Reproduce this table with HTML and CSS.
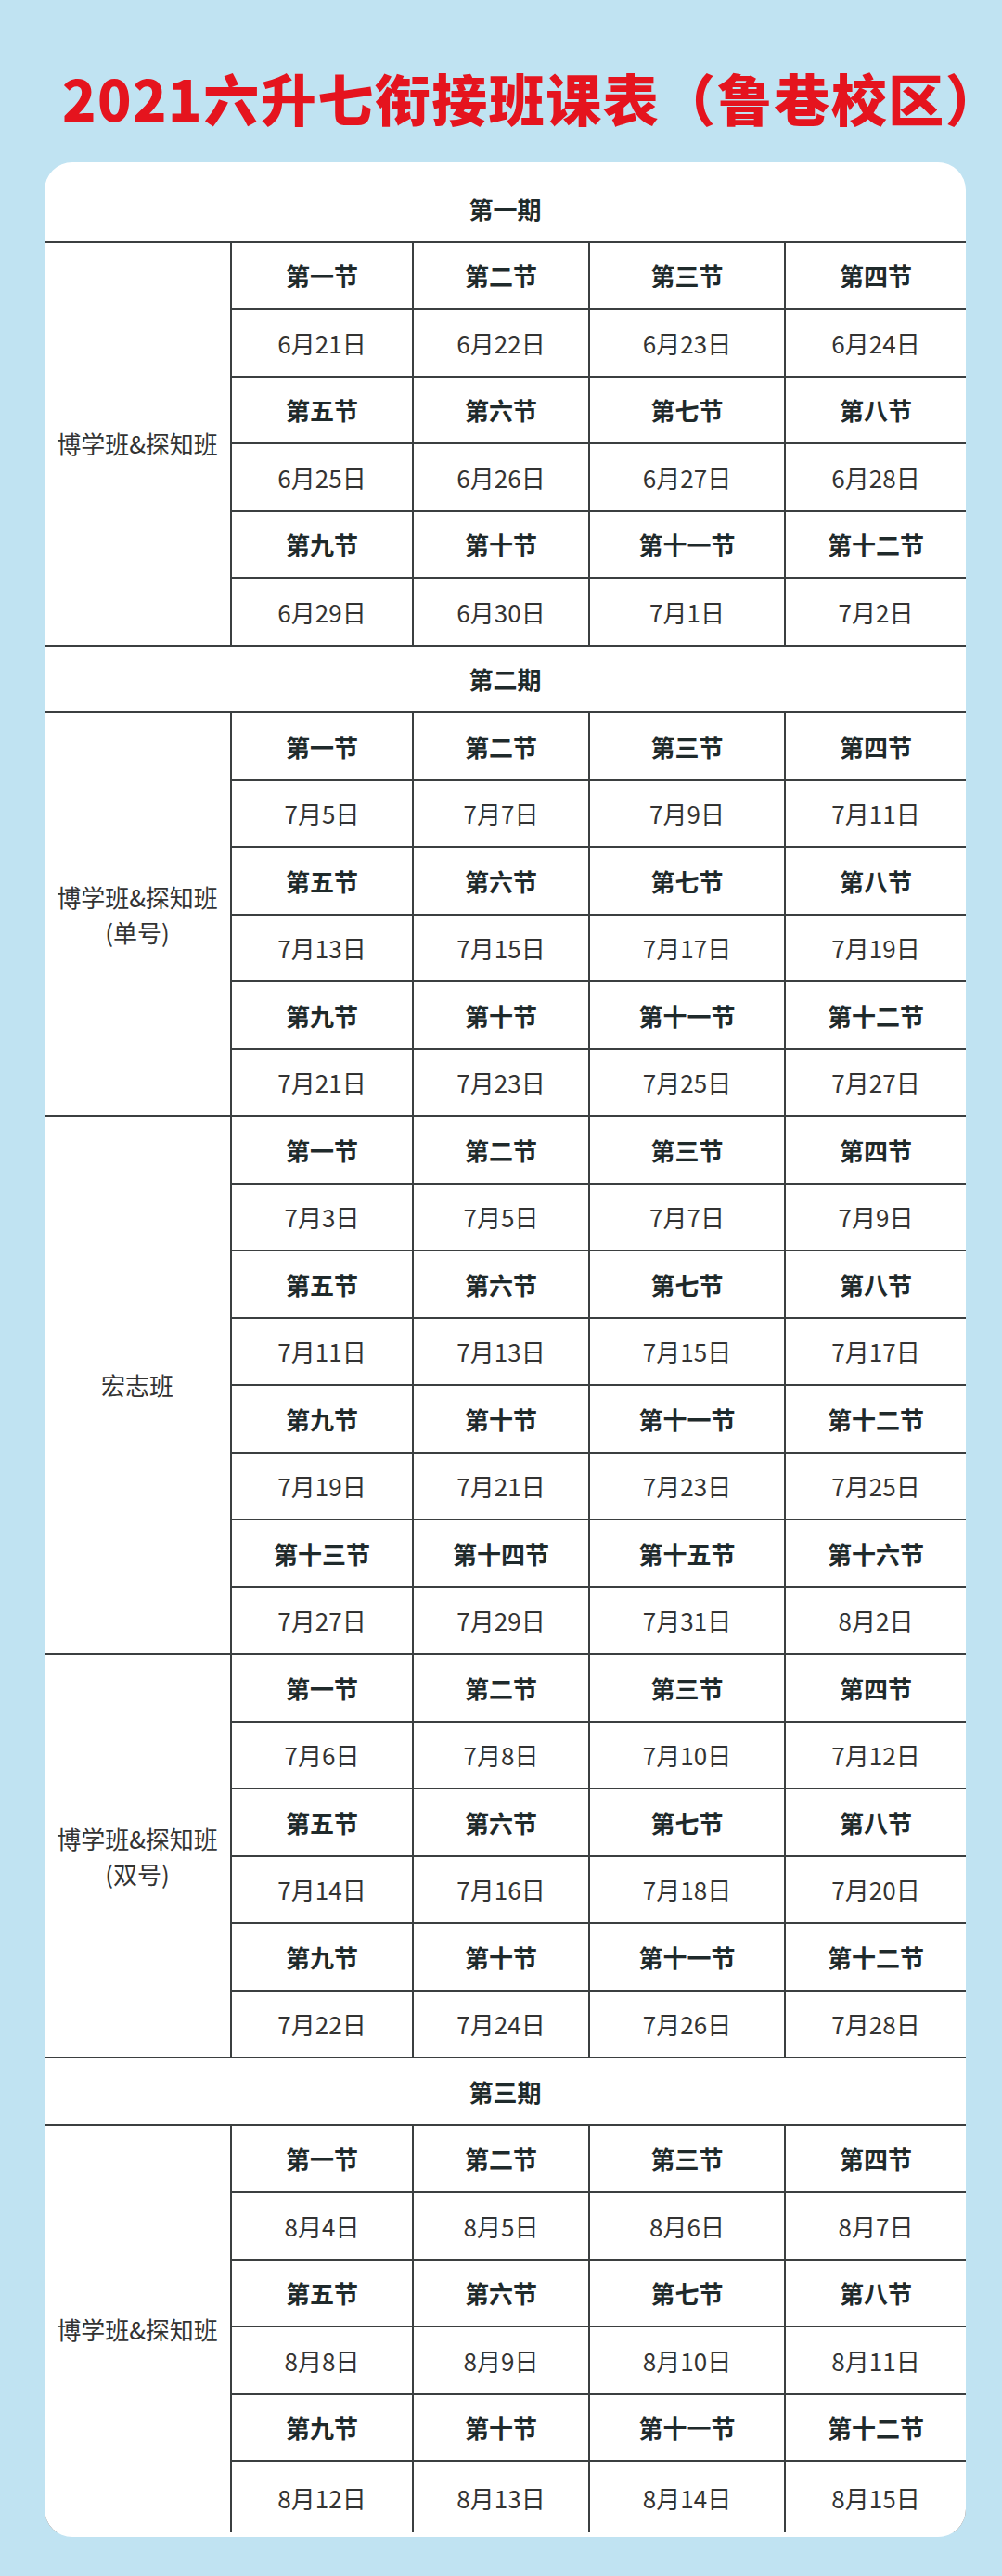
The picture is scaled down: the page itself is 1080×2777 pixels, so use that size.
FILE: index.html
```html
<!DOCTYPE html>
<html lang="zh-CN">
<head>
<meta charset="utf-8">
<title>2021六升七衔接班课表（鲁巷校区）</title>
<link rel="stylesheet" href="styles.css">
</head>
<body>
<div class="page">
  <h1 class="title">2021六升七衔接班课表（鲁巷校区）</h1>
  <div class="card">
    <div class="period first">第一期</div>
    <div class="block r6">
      <div class="label">博学班&amp;探知班</div>
      <div class="h">第一节</div><div class="h">第二节</div><div class="h">第三节</div><div class="h">第四节</div>
      <div class="d">6月21日</div><div class="d">6月22日</div><div class="d">6月23日</div><div class="d">6月24日</div>
      <div class="h">第五节</div><div class="h">第六节</div><div class="h">第七节</div><div class="h">第八节</div>
      <div class="d">6月25日</div><div class="d">6月26日</div><div class="d">6月27日</div><div class="d">6月28日</div>
      <div class="h">第九节</div><div class="h">第十节</div><div class="h">第十一节</div><div class="h">第十二节</div>
      <div class="d">6月29日</div><div class="d">6月30日</div><div class="d">7月1日</div><div class="d">7月2日</div>
    </div>
    <div class="period">第二期</div>
    <div class="block r6">
      <div class="label">博学班&amp;探知班<br>(单号)</div>
      <div class="h">第一节</div><div class="h">第二节</div><div class="h">第三节</div><div class="h">第四节</div>
      <div class="d">7月5日</div><div class="d">7月7日</div><div class="d">7月9日</div><div class="d">7月11日</div>
      <div class="h">第五节</div><div class="h">第六节</div><div class="h">第七节</div><div class="h">第八节</div>
      <div class="d">7月13日</div><div class="d">7月15日</div><div class="d">7月17日</div><div class="d">7月19日</div>
      <div class="h">第九节</div><div class="h">第十节</div><div class="h">第十一节</div><div class="h">第十二节</div>
      <div class="d">7月21日</div><div class="d">7月23日</div><div class="d">7月25日</div><div class="d">7月27日</div>
    </div>
    <div class="block r8">
      <div class="label">宏志班</div>
      <div class="h">第一节</div><div class="h">第二节</div><div class="h">第三节</div><div class="h">第四节</div>
      <div class="d">7月3日</div><div class="d">7月5日</div><div class="d">7月7日</div><div class="d">7月9日</div>
      <div class="h">第五节</div><div class="h">第六节</div><div class="h">第七节</div><div class="h">第八节</div>
      <div class="d">7月11日</div><div class="d">7月13日</div><div class="d">7月15日</div><div class="d">7月17日</div>
      <div class="h">第九节</div><div class="h">第十节</div><div class="h">第十一节</div><div class="h">第十二节</div>
      <div class="d">7月19日</div><div class="d">7月21日</div><div class="d">7月23日</div><div class="d">7月25日</div>
      <div class="h">第十三节</div><div class="h">第十四节</div><div class="h">第十五节</div><div class="h">第十六节</div>
      <div class="d">7月27日</div><div class="d">7月29日</div><div class="d">7月31日</div><div class="d">8月2日</div>
    </div>
    <div class="block r6">
      <div class="label">博学班&amp;探知班<br>(双号)</div>
      <div class="h">第一节</div><div class="h">第二节</div><div class="h">第三节</div><div class="h">第四节</div>
      <div class="d">7月6日</div><div class="d">7月8日</div><div class="d">7月10日</div><div class="d">7月12日</div>
      <div class="h">第五节</div><div class="h">第六节</div><div class="h">第七节</div><div class="h">第八节</div>
      <div class="d">7月14日</div><div class="d">7月16日</div><div class="d">7月18日</div><div class="d">7月20日</div>
      <div class="h">第九节</div><div class="h">第十节</div><div class="h">第十一节</div><div class="h">第十二节</div>
      <div class="d">7月22日</div><div class="d">7月24日</div><div class="d">7月26日</div><div class="d">7月28日</div>
    </div>
    <div class="period">第三期</div>
    <div class="block r6 last">
      <div class="label">博学班&amp;探知班</div>
      <div class="h">第一节</div><div class="h">第二节</div><div class="h">第三节</div><div class="h">第四节</div>
      <div class="d">8月4日</div><div class="d">8月5日</div><div class="d">8月6日</div><div class="d">8月7日</div>
      <div class="h">第五节</div><div class="h">第六节</div><div class="h">第七节</div><div class="h">第八节</div>
      <div class="d">8月8日</div><div class="d">8月9日</div><div class="d">8月10日</div><div class="d">8月11日</div>
      <div class="h">第九节</div><div class="h">第十节</div><div class="h">第十一节</div><div class="h">第十二节</div>
      <div class="d">8月12日</div><div class="d">8月13日</div><div class="d">8月14日</div><div class="d">8月15日</div>
    </div>
  </div>
</div>
</body>
</html>
```

FILE: styles.css
```css
html, body {
  margin: 0;
  padding: 0;
}
body {
  background: #c0e3f2;
  font-family: "Noto Sans CJK SC", "Noto Sans", sans-serif;
}
.page {
  width: 1080px;
  min-height: 2777px;
  background: #c0e3f2;
  padding-top: 75px;
  box-sizing: border-box;
}
.title {
  margin: 0 0 40px 0;
  padding-left: 67px;
  height: 60px;
  line-height: 60px;
  font-size: 60px;
  font-weight: 900;
  color: #e5141e;
  white-space: nowrap;
  letter-spacing: 1.5px;
}
.card {
  margin-left: 48px;
  width: 993px;
  background: #ffffff;
  border-radius: 30px;
  overflow: hidden;
  padding-bottom: 5px;
}
.period {
  height: 70.5px;
  display: flex;
  align-items: center;
  justify-content: center;
  font-size: 26px;
  font-weight: 700;
  color: #1f2a2b;
  border-bottom: 2px solid #3b3f40;
}
.period.first {
  padding-top: 14px;
}
.block {
  display: grid;
  grid-template-columns: 200px 194px 188px 209px 194px;
  grid-auto-rows: 70.5px;
  gap: 2px;
  background: #3b3f40;
  border-bottom: 2px solid #3b3f40;
}
.block.last {
  border-bottom: 0;
  grid-template-rows: 70.5px 70.5px 70.5px 70.5px 70.5px 76px;
}
.block > div {
  background: #ffffff;
  display: flex;
  align-items: center;
  justify-content: center;
  text-align: center;
  font-size: 26px;
}
.r6 .label { grid-row: span 6; }
.r8 .label { grid-row: span 8; }
.block .label {
  grid-column: 1;
  font-weight: 400;
  color: #333333;
  line-height: 38px;
}
.block .h {
  font-weight: 700;
  color: #1f2a2b;
}
.block .d {
  font-weight: 400;
  color: #333333;
}
```
